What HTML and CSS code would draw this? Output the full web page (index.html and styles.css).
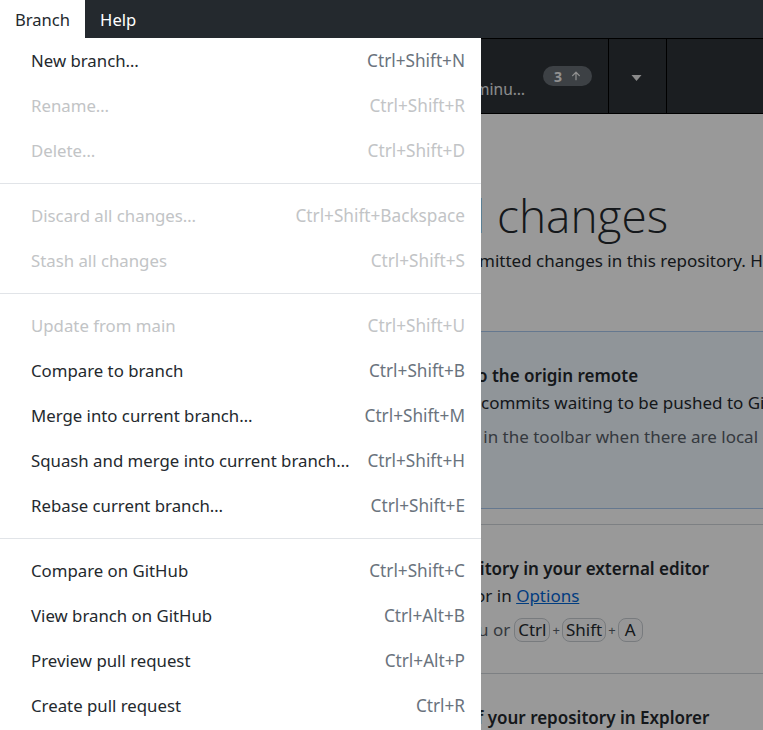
FILE: index.html
```html
<!DOCTYPE html>
<html lang="en">
<head>
<meta charset="utf-8">
<title>GitHub Desktop – Branch menu</title>
<link rel="stylesheet" href="styles.css">
</head>
<body>
<div class="app">
  <header class="menubar">
    <span class="menu-title is-open">Branch</span>
    <span class="menu-title">Help</span>
  </header>

  <div class="toolbar">
    <div class="tb-left"></div>
    <div class="tb-push">
      <div class="push-text">
        <div class="push-title">Push origin</div>
        <div class="push-sub">Last fetched 5 minu…</div>
      </div>
      <span class="badge">3
        <svg class="badge-arrow" viewBox="0 0 16 16" width="12" height="12"><path d="M8 13V3M3.5 7.5 8 3l4.5 4.5" fill="none" stroke="currentColor" stroke-width="1.6" stroke-linecap="round" stroke-linejoin="round"/></svg>
      </span>
    </div>
    <div class="tb-drop">
      <svg class="caret" viewBox="0 0 10 6" width="11" height="6"><path d="M0 0h10L5 6z" fill="#e6e6e6"/></svg>
    </div>
    <div class="tb-rest"></div>
  </div>

  <main class="content">
    <div class="blank">
      <h1 class="blank-title">No local changes</h1>
      <p class="blank-sub">There are no uncommitted changes in this repository. Here are some friendly suggestions for what to do next.</p>

      <div class="suggestion">
        <div class="s-title">Push commits to the origin remote</div>
        <div class="s-desc">You have 3 local commits waiting to be pushed to GitHub.</div>
        <div class="s-hint">Always available in the toolbar when there are local commits waiting to be pushed or Ctrl+P</div>
      </div>

      <div class="action">
        <div class="s-title">Open the repository in your external editor</div>
        <div class="s-desc">Select your editor in <a class="link" href="#">Options</a></div>
        <div class="s-keys">Repository menu or <kbd>Ctrl</kbd><span class="plus">+</span><kbd>Shift</kbd><span class="plus">+</span><kbd>A</kbd></div>
      </div>

      <div class="action">
        <div class="s-title">View the files of your repository in Explorer</div>
      </div>
    </div>
  </main>

  <div class="scrim"></div>

  <nav class="menu">
    <div class="item"><span>New branch…</span><span class="key">Ctrl+Shift+N</span></div>
    <div class="item is-disabled"><span>Rename…</span><span class="key">Ctrl+Shift+R</span></div>
    <div class="item is-disabled"><span>Delete…</span><span class="key">Ctrl+Shift+D</span></div>
    <div class="sep"></div>
    <div class="item is-disabled"><span>Discard all changes…</span><span class="key">Ctrl+Shift+Backspace</span></div>
    <div class="item is-disabled"><span>Stash all changes</span><span class="key">Ctrl+Shift+S</span></div>
    <div class="sep"></div>
    <div class="item is-disabled"><span>Update from main</span><span class="key">Ctrl+Shift+U</span></div>
    <div class="item"><span>Compare to branch</span><span class="key">Ctrl+Shift+B</span></div>
    <div class="item"><span>Merge into current branch…</span><span class="key">Ctrl+Shift+M</span></div>
    <div class="item"><span>Squash and merge into current branch…</span><span class="key">Ctrl+Shift+H</span></div>
    <div class="item"><span>Rebase current branch…</span><span class="key">Ctrl+Shift+E</span></div>
    <div class="sep"></div>
    <div class="item"><span>Compare on GitHub</span><span class="key">Ctrl+Shift+C</span></div>
    <div class="item"><span>View branch on GitHub</span><span class="key">Ctrl+Alt+B</span></div>
    <div class="item"><span>Preview pull request</span><span class="key">Ctrl+Alt+P</span></div>
    <div class="item"><span>Create pull request</span><span class="key">Ctrl+R</span></div>
  </nav>
</div>
</body>
</html>
```

FILE: styles.css
```css
* { box-sizing: border-box; }

html, body {
  margin: 0;
  padding: 0;
  height: 100%;
  overflow: hidden;
}

body {
  font-family: "Noto Sans", "Open Sans", sans-serif;
  color: #24292e;
  background: #ffffff;
}

.app {
  position: relative;
  width: 763px;
  height: 730px;
  overflow: hidden;
  display: flex;
  flex-direction: column;
}

/* ---------- window menu bar ---------- */
.menubar {
  height: 38px;
  flex: 0 0 38px;
  background: #24292e;
  display: flex;
  align-items: stretch;
}

.menu-title {
  display: flex;
  align-items: center;
  padding: 0 15px;
  font-size: 16.6px;
  color: #ffffff;
}

.menu-title.is-open {
  background: #ffffff;
  color: #24292e;
}

/* ---------- toolbar ---------- */
.toolbar {
  height: 76px;
  flex: 0 0 76px;
  background: #2e3338;
  display: flex;
  border-top: 1px solid #000;
  border-bottom: 1px solid #000;
}

.tb-left { width: 378px; flex: 0 0 378px; }

.tb-push {
  width: 230px;
  flex: 0 0 230px;
  display: flex;
  align-items: center;
  justify-content: flex-end;
  padding-right: 16px;
  border-left: 1px solid #000;
}

.push-text {
  white-space: nowrap;
  margin-right: 18px;
}

.push-title {
  font-size: 15px;
  font-weight: 600;
  color: #fff;
  line-height: 20px;
}

.push-sub {
  font-size: 15.5px;
  line-height: 22px;
  color: #e8eaec;
  margin-top: 6px;
}

.badge {
  display: inline-flex;
  align-items: center;
  gap: 8px;
  height: 20px;
  padding: 0 10px 0 11px;
  border-radius: 10px;
  background: #666d74;
  color: #f2f2f2;
  font-size: 14px;
  font-weight: 700;
}

.badge-arrow { color: #f2f2f2; }

.tb-drop {
  width: 59px;
  flex: 0 0 59px;
  display: flex;
  align-items: center;
  justify-content: center;
  border-left: 1px solid #000;
  border-right: 1px solid #000;
}

.caret { margin-top: 4px; margin-left: -2px; }

.tb-rest { flex: 1; }

/* ---------- blank slate ---------- */
.content {
  flex: 1;
  background: #ffffff;
  overflow: hidden;
}

.blank {
  padding-left: 319px;
  width: 1200px;
  white-space: nowrap;
}

.blank-title {
  margin: 69px 0 0;
  font-size: 46px;
  line-height: 64px;
  font-weight: 300;
  font-family: "Open Sans", "Noto Sans", sans-serif;
  color: #24292e;
}

.blank-sub {
  margin: 2px 0 0 -1px;
  font-size: 17px;
  line-height: 24px;
  color: #24292e;
}

.suggestion {
  margin-top: 58px;
  height: 178px;
  padding: 32px 24px 0 29px;
  background: #f1f8ff;
  border: 1px solid #a9c8ef;
  border-radius: 6px;
}

.s-title {
  font-size: 17px;
  line-height: 24px;
  font-weight: 600;
  color: #24292e;
}

.s-desc {
  margin-top: 3px;
  font-size: 17px;
  line-height: 24px;
  color: #24292e;
}

.s-hint {
  margin-top: 10px;
  font-size: 17px;
  line-height: 24px;
  color: #586069;
}

.action {
  border-top: 1px solid #d1d5da;
  padding: 32px 0 0 33px;
  height: 149px;
}

.suggestion + .action { margin-top: 15px; }

.link {
  color: #0366d6;
  text-decoration: underline;
}

.s-keys {
  margin-top: 8px;
  font-size: 17px;
  line-height: 28px;
  color: #586069;
  display: flex;
  align-items: center;
}

kbd {
  font-family: inherit;
  font-size: 17px;
  line-height: 22px;
  min-width: 25px;
  text-align: center;
  color: #24292e;
  padding: 0 3px;
  border: 1px solid #c8cdd2;
  border-radius: 8px;
  background: #fafbfc;
}

.s-keys kbd:first-of-type { margin-left: 4px; }

.plus {
  font-size: 13px;
  padding: 0 2px;
  color: #586069;
}

/* ---------- scrim + dropdown menu ---------- */
.scrim {
  position: absolute;
  left: 0;
  right: 0;
  top: 38px;
  bottom: 0;
  background: rgba(0, 0, 0, 0.4);
}

.menu {
  position: absolute;
  top: 38px;
  left: 0;
  width: 481px;
  height: 720px;
  background: #ffffff;
}

.item {
  height: 45px;
  display: flex;
  align-items: center;
  justify-content: space-between;
  padding: 0 16px 0 31px;
  font-size: 16.8px;
  color: #24292e;
  white-space: nowrap;
}

.item .key { color: #6a737d; font-size: 17.2px; }

.item.is-disabled,
.item.is-disabled .key { color: #c2c4c6; }

.sep {
  height: 1px;
  margin: 10px 0 9px;
  background: #e1e4e8;
}
```
